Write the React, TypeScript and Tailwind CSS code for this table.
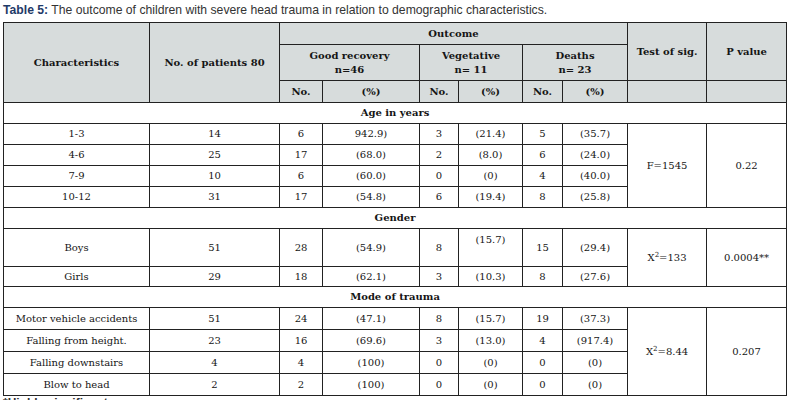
import React from "react";

type Row = {
  label: string;
  n: string;
  cells: string[];
};

const serif = "font-['DejaVu_Serif',serif]";
const cell = "border border-[#222] text-center align-middle p-0";
const head = `${cell} bg-[#d7dcdc] font-bold`;

const ageRows: Row[] = [
  { label: "1-3", n: "14", cells: ["6", "942.9)", "3", "(21.4)", "5", "(35.7)"] },
  { label: "4-6", n: "25", cells: ["17", "(68.0)", "2", "(8.0)", "6", "(24.0)"] },
  { label: "7-9", n: "10", cells: ["6", "(60.0)", "0", "(0)", "4", "(40.0)"] },
  { label: "10-12", n: "31", cells: ["17", "(54.8)", "6", "(19.4)", "8", "(25.8)"] },
];

const traumaRows: Row[] = [
  { label: "Motor vehicle accidents", n: "51", cells: ["24", "(47.1)", "8", "(15.7)", "19", "(37.3)"] },
  { label: "Falling from height.", n: "23", cells: ["16", "(69.6)", "3", "(13.0)", "4", "(917.4)"] },
  { label: "Falling downstairs", n: "4", cells: ["4", "(100)", "0", "(0)", "0", "(0)"] },
  { label: "Blow to head", n: "2", cells: ["2", "(100)", "0", "(0)", "0", "(0)"] },
];

function DataCells({ row }: { row: Row }) {
  return (
    <>
      <td className={cell}>{row.label}</td>
      <td className={cell}>{row.n}</td>
      {row.cells.map((c, i) => (
        <td key={i} className={cell}>
          {c}
        </td>
      ))}
    </>
  );
}

function Section({ title }: { title: string }) {
  return (
    <tr className="h-[21px]">
      <td colSpan={10} className={`${cell} font-bold`}>
        {title}
      </td>
    </tr>
  );
}

export default function App() {
  return (
    <div className="w-[792px] h-[400px] overflow-hidden bg-white">
      <p className="pl-[3px] pt-[2px] h-[22px] text-[12.2px] leading-[16px] text-[#333] font-['Liberation_Sans',Arial,sans-serif]">
        <span className="font-bold text-[#1f3a68]">Table 5:</span> The outcome of children with severe head trauma in
        relation to demographic characteristics.
      </p>
      <table
        className={`ml-[3px] w-[783px] table-fixed border-collapse text-[10px] leading-[14px] text-[#151515] ${serif}`}
      >
        <colgroup>
          <col className="w-[146px]" />
          <col className="w-[130px]" />
          <col className="w-[43px]" />
          <col className="w-[97px]" />
          <col className="w-[39px]" />
          <col className="w-[64px]" />
          <col className="w-[40px]" />
          <col className="w-[65px]" />
          <col className="w-[79px]" />
          <col className="w-[80px]" />
        </colgroup>
        <tbody>
          <tr className="h-[22px]">
            <td rowSpan={3} className={head}>
              Characteristics
            </td>
            <td rowSpan={3} className={head}>
              No. of patients 80
            </td>
            <td colSpan={6} className={head}>
              Outcome
            </td>
            <td rowSpan={2} className={head}>
              Test of sig.
            </td>
            <td rowSpan={2} className={head}>
              P value
            </td>
          </tr>
          <tr className="h-[36px]">
            <td colSpan={2} className={head}>
              Good recovery
              <br />
              n=46
            </td>
            <td colSpan={2} className={head}>
              Vegetative
              <br />
              n= 11
            </td>
            <td colSpan={2} className={head}>
              Deaths
              <br />
              n= 23
            </td>
          </tr>
          <tr className="h-[22px]">
            <td className={head}>No.</td>
            <td className={head}>(%)</td>
            <td className={head}>No.</td>
            <td className={head}>(%)</td>
            <td className={head}>No.</td>
            <td className={head}>(%)</td>
            <td className={head}></td>
            <td className={head}></td>
          </tr>

          <Section title="Age in years" />
          {ageRows.map((row, i) => (
            <tr key={row.label} className="h-[21px]">
              <DataCells row={row} />
              {i === 0 && (
                <>
                  <td rowSpan={4} className={cell}>
                    F=1545
                  </td>
                  <td rowSpan={4} className={cell}>
                    0.22
                  </td>
                </>
              )}
            </tr>
          ))}

          <Section title="Gender" />
          <tr className="h-[38px]">
            <td className={cell}>Boys</td>
            <td className={cell}>51</td>
            <td className={cell}>28</td>
            <td className={cell}>(54.9)</td>
            <td className={cell}>8</td>
            <td className={`${cell} !align-top pt-[4px]`}>(15.7)</td>
            <td className={cell}>15</td>
            <td className={cell}>(29.4)</td>
            <td rowSpan={2} className={cell}>
              X<sup className="text-[7px]">2</sup>=133
            </td>
            <td rowSpan={2} className={cell}>
              0.0004**
            </td>
          </tr>
          <tr className="h-[20px]">
            <td className={cell}>Girls</td>
            <td className={cell}>29</td>
            <td className={cell}>18</td>
            <td className={cell}>(62.1)</td>
            <td className={cell}>3</td>
            <td className={cell}>(10.3)</td>
            <td className={cell}>8</td>
            <td className={cell}>(27.6)</td>
          </tr>

          <Section title="Mode of trauma" />
          {traumaRows.map((row, i) => (
            <tr key={row.label} className="h-[22px]">
              <DataCells row={row} />
              {i === 0 && (
                <>
                  <td rowSpan={4} className={cell}>
                    X<sup className="text-[7px]">2</sup>=8.44
                  </td>
                  <td rowSpan={4} className={cell}>
                    0.207
                  </td>
                </>
              )}
            </tr>
          ))}
        </tbody>
      </table>
      <p className="pl-[3px] text-[12px] leading-[14px] font-bold text-[#333] font-['Liberation_Sans',Arial,sans-serif]">
        *Highly significant
      </p>
    </div>
  );
}
